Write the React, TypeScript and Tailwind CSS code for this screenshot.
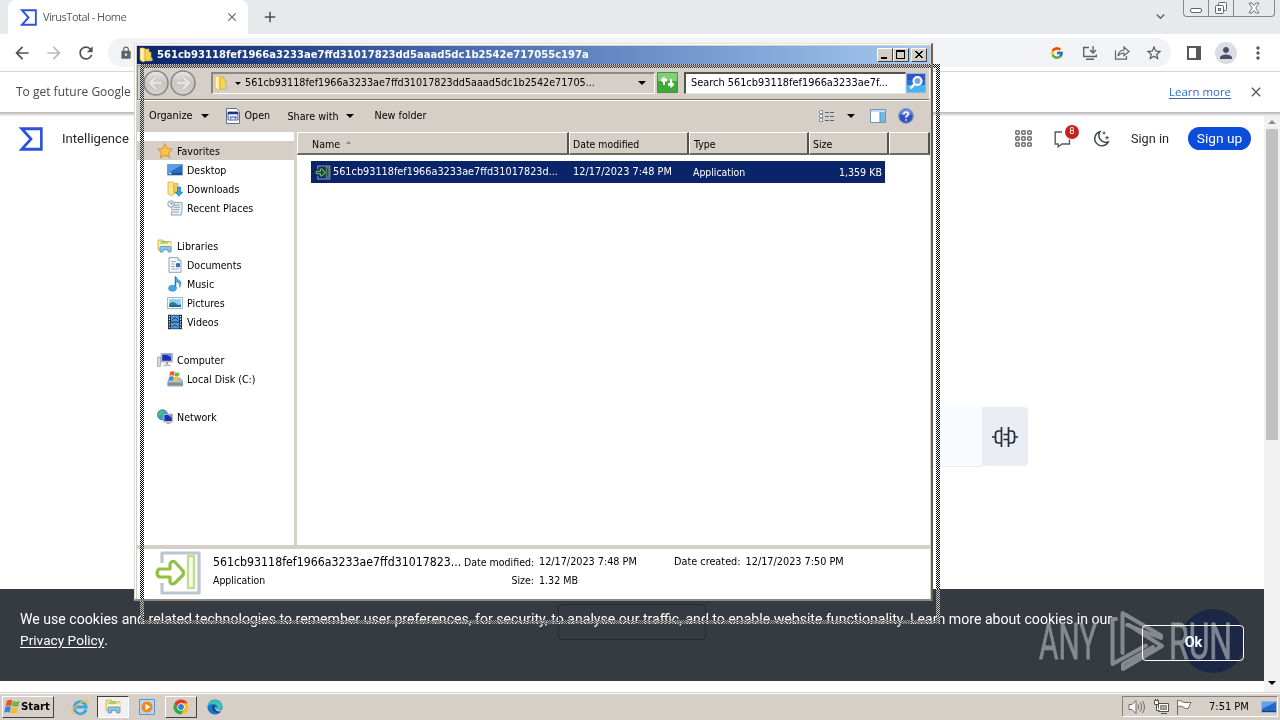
import type { ReactNode } from "react";
import { MdArrowBack, MdArrowForward, MdRefresh, MdLock, MdStarBorder, MdClose, MdAdd, MdMoreVert, MdPerson, MdExpandMore } from "react-icons/md";
import { FcGoogle } from "react-icons/fc";

const folderId = "561cb93118fef1966a3233ae7ffd31017823dd5aaad5dc1b2542e717055c197a";

function Caret({ className = "" }: { className?: string }) {
  return (
    <svg viewBox="0 0 8 4" className={`h-1 w-2 shrink-0 ${className}`}>
      <path d="M0 0h8L4 4z" fill="#000" />
    </svg>
  );
}

function SigmaLogo({ size }: { size: number }) {
  return (
    <svg width={size} height={size} viewBox="0 0 22 20" preserveAspectRatio="none" className="shrink-0">
      <path d="M2.5 1.5H20.5V18.5H2.5L11 10Z" fill="none" stroke="#2b52dd" strokeWidth="2.4" />
    </svg>
  );
}

function FolderIcon() {
  return (
    <svg viewBox="0 0 16 16" className="h-4 w-4 shrink-0">
      <path d="M2 1h4l1 1v12l-2 1-3-2z" fill="#fbe98c" stroke="#d9b43c" strokeWidth=".6" />
      <path d="M7 2h4v3h2v9H7z" fill="#f3d45c" stroke="#cfa22e" strokeWidth=".6" />
      <path d="M4 2v11" stroke="#fffbd6" strokeWidth="1.4" />
      <path d="M13 10v4h1.5v-3z" fill="#9ccdf0" />
    </svg>
  );
}

function AppIcon({ className, dark = false }: { className: string; dark?: boolean }) {
  return (
    <svg viewBox="0 0 46 46" className={className}>
      <path
        d="M7 13V3H44V43H7V33"
        fill={dark ? "#0f2a66" : "#fff"}
        stroke={dark ? "#7fa3c8" : "#bcc5d2"}
        strokeWidth="3.2"
        strokeLinejoin="round"
      />
      <path d="M33 6h6v32h-6z" fill={dark ? "none" : "#f7fbef"} stroke={dark ? "#86b86a" : "#c3dd8f"} strokeWidth="2.4" />
      <path
        d="M4 19H15V14Q17 10 20 12L28 21Q29 23 28 25L20 33Q16 35 15 32V27H4Q0 23 4 19Z"
        fill={dark ? "#173f5c" : "#fff"}
        stroke={dark ? "#7fc254" : "#92c043"}
        strokeWidth="3.2"
        strokeLinejoin="round"
      />
    </svg>
  );
}

function LibraryIcon({ className = "h-4 w-4" }: { className?: string }) {
  return (
    <svg viewBox="0 0 16 16" className={className}>
      <path d="M1 2h5l1 1.5h7V12H1z" fill="#f8e08a" stroke="#cfae4b" strokeWidth=".8" />
      <path d="M2 5h12v4H2z" fill="#fdf3bf" />
      <path d="M5 3.5h4M3 5h8" stroke="#7fbf6a" strokeWidth="1" />
      <path d="M3 14V9.5q0-1 1-1h9q1 0 1 1V14h-3v-2.500H6V14z" fill="#8ec6ee" stroke="#4a93cc" strokeWidth=".8" />
    </svg>
  );
}

const icons: Record<string, ReactNode> = {
  star: (
    <path d="M8 .8 10.200 5.500 15.400 6 11.600 9.600 12.800 15 8 12.200 3.200 15 4.400 9.600.6 6 5.800 5.500z" fill="#fcc14a" stroke="#e08a1e" strokeWidth=".9" />
  ),
  desktop: (
    <>
      <path d="M.5 2.500h15v10.500H.5z" fill="#2d6cc4" stroke="#7c9bc2" />
      <path d="M1 3h14L1 11z" fill="#5d9ce6" />
      <path d="M1 12h14" stroke="#1a3f7d" strokeWidth="1.500" />
      <path d="M1.500 11.500h3" stroke="#cfe8ff" strokeWidth="1.500" />
    </>
  ),
  downloads: (
    <>
      <path d="M1 1h5l1 1.500V13l-2 2-4-2z" fill="#fbe48a" stroke="#d2a83b" strokeWidth=".7" />
      <path d="M7 2.500h4v10H7z" fill="#f2cf5c" stroke="#d2a83b" strokeWidth=".7" />
      <path d="M10.500 6h3v5h2.200L12 15.300 8.300 11h2.200z" fill="#3aa0e6" stroke="#1a74b8" strokeWidth=".7" />
    </>
  ),
  recent: (
    <>
      <path d="M5 2.500h10v8l-1 4.500H4l1-3z" fill="#eef3f7" stroke="#8799a8" strokeWidth=".9" />
      <path d="M7 5h6M7 7.200h6M6.500 9.500h6M6 12h6" stroke="#7d97ad" strokeWidth=".9" />
      <circle cx="4" cy="4" r="3.200" fill="#f6fafd" stroke="#7f93a5" strokeWidth=".9" />
      <path d="M4 2v2h1.700" stroke="#456" strokeWidth=".8" fill="none" />
    </>
  ),
  document: (
    <>
      <path d="M2 .7h9l3 3V15.300H2z" fill="#fbfdff" stroke="#7e96b0" strokeWidth=".9" />
      <path d="M11 .7v3h3" fill="#d5e2ef" stroke="#7e96b0" strokeWidth=".7" />
      <path d="M4 4.500h5M4 7h4M4 9.500h4M4 12h8" stroke="#8aa0bb" strokeWidth=".9" />
      <path d="M9 6.200h4v4H9z" fill="#2f72b8" />
    </>
  ),
  music: (
    <>
      <path d="M8.500 1v11" stroke="#2579bd" strokeWidth="1.600" />
      <path d="M8.500 0q1 3 4 4.500t0 7q1-5-4-6z" fill="#4aa7e4" stroke="#2579bd" strokeWidth=".5" />
      <ellipse cx="5.500" cy="12.300" rx="4" ry="3" fill="#46a5e8" stroke="#2579bd" strokeWidth=".5" />
    </>
  ),
  picture: (
    <>
      <path d="M.6 2.600h14.800v11H.6z" fill="#fff" stroke="#8aa7c2" strokeWidth=".9" />
      <path d="M2.200 4.200h11.600v7.800H2.200z" fill="#8dcdf3" />
      <path d="M2.200 8.500q4-3 7 0t4.600 0V12H2.200z" fill="#2b7f95" />
      <path d="M2.200 10.500h11.600V12H2.200z" fill="#1f5f9c" />
    </>
  ),
  video: (
    <>
      <path d="M1 .8h14v14.400H1z" fill="#1f2c38" />
      <path d="M4 1.600h8v6H4zM4 8.600h8v6H4z" fill="#4c9ae0" />
      <path d="M5 6q3-4 6 0M5 13q3-4 6 0" stroke="#173f78" fill="none" />
      <path d="M2.500 2v13M13.500 2v13" stroke="#e8eef4" strokeWidth="1.200" strokeDasharray="1.300 1.300" />
    </>
  ),
  computer: (
    <>
      <path d="M.6 5h2.800v9.400H.6z" fill="#dcdfe4" stroke="#8b919b" strokeWidth=".7" />
      <path d="M4 1.500h11.400v8.500H4z" fill="#cfd3da" stroke="#8f95a1" strokeWidth=".7" />
      <path d="M5.200 2.600h9v6.200h-9z" fill="#1c2fb5" />
      <path d="M9 2.600h5.200v3z" fill="#6f88ea" />
      <path d="M7 12.500h6l1.500 1.800H6z" fill="#b9bec8" />
      <path d="M9 10h2v2.500H9z" fill="#9ba1ad" />
    </>
  ),
  disk: (
    <>
      <path d="M2 9 4 7h9l2.500 3v5H.8V11z" fill="#b7bfc8" stroke="#7b8692" strokeWidth=".7" />
      <path d="M1.200 11.500h14v2.800h-14z" fill="#79909f" />
      <path d="M12 12h2v1.600h-2z" fill="#56c84d" />
      <path d="M3.200.8q2.300-1.300 4.400 0L6.800 4.800q-2.200-1-4.400.3z" fill="#ee5a2c" />
      <path d="M8.200 1.200q2.200 1 4.400 0L11.600 5.200q-2.200.8-4.300-.2z" fill="#6cba3a" />
      <path d="M2.200 5.800q2.200-1.200 4.400-.2l-.8 4q-2.200-1-4.400.2z" fill="#3d8be0" />
      <path d="M7.100 5.900q2.200 1 4.400.1L10.700 10q-2.200.8-4.400-.2z" fill="#fbc226" />
    </>
  ),
  network: (
    <>
      <circle cx="5.500" cy="5.800" r="5.200" fill="#3c9bd2" stroke="#2a6f9f" strokeWidth=".5" />
      <path d="M3 2q3-1 4 1l-2 3-3 1-1-2zM5 8l3 .5-1 2.200H5z" fill="#4fc06a" />
      <path d="M6.500 5h9.200v8H6.500z" fill="#cfd3da" stroke="#8f95a1" strokeWidth=".6" />
      <path d="M7.400 5.900h7.400v6.100H7.400z" fill="#1c2fb5" />
      <path d="M11 5.900h3.800v3z" fill="#7c92ee" />
      <path d="M9.500 13.200h4V15h-4z" fill="#aeb4bf" />
    </>
  ),
};

interface TreeRow {
  label: string;
  icon: string;
  root?: boolean;
  active?: boolean;
}

const tree: (TreeRow | null)[] = [
  { label: "Favorites", icon: "star", root: true, active: true },
  { label: "Desktop", icon: "desktop" },
  { label: "Downloads", icon: "downloads" },
  { label: "Recent Places", icon: "recent" },
  null,
  { label: "Libraries", icon: "library", root: true },
  { label: "Documents", icon: "document" },
  { label: "Music", icon: "music" },
  { label: "Pictures", icon: "picture" },
  { label: "Videos", icon: "video" },
  null,
  { label: "Computer", icon: "computer", root: true },
  { label: "Local Disk (C:)", icon: "disk" },
  null,
  { label: "Network", icon: "network", root: true },
];

function Sidebar() {
  return (
    <div className="flex w-[157px] shrink-0 flex-col bg-white pt-[9px] text-[10.600px]">
      {tree.map((row, i) =>
        row ? (
          <div
            key={i}
            className={`flex h-[19px] items-center gap-1 ${row.active ? "bg-[#d6cfc7]" : ""} ${row.root ? "pl-5" : "pl-[30px]"}`}
          >
            {row.icon === "library" ? (
              <LibraryIcon />
            ) : (
              <svg viewBox="0 0 16 16" className="h-4 w-4 shrink-0">
                {icons[row.icon]}
              </svg>
            )}
            <span className="pt-0.5">{row.label}</span>
          </div>
        ) : (
          <div key={i} className="h-[19px]" />
        ),
      )}
    </div>
  );
}

function HeaderCell({ className, children }: { className: string; children?: ReactNode }) {
  return (
    <div
      className={`flex h-[23px] items-center border-t border-r-2 border-b-2 border-l border-t-white border-r-[#55524e] border-b-[#6d6a65] border-l-white bg-[#d6cfc7] pt-[3px] ${className}`}
    >
      {children}
    </div>
  );
}

function CaptionButton({ children }: { children: ReactNode }) {
  return (
    <div className="flex h-[14px] w-4 items-center justify-center border border-t-white border-r-[#404040] border-b-[#404040] border-l-white bg-[#d6cfc7]">
      <svg viewBox="0 0 10 10" className="h-[10px] w-[10px]" shapeRendering="crispEdges">
        {children}
      </svg>
    </div>
  );
}

function NavCircle({ flip = false }: { flip?: boolean }) {
  return (
    <svg viewBox="0 0 26 26" className="h-[26px] w-[26px] shrink-0">
      <defs>
        <linearGradient id="navFace" x1="0" y1="0" x2="0" y2="1">
          <stop offset="0" stopColor="#e9e8e6" />
          <stop offset=".5" stopColor="#c6c4c1" />
          <stop offset="1" stopColor="#d8d6d2" />
        </linearGradient>
      </defs>
      <circle cx="13" cy="13" r="12" fill="url(#navFace)" stroke="#8a8886" strokeWidth="1.600" />
      <g transform={flip ? "matrix(-1 0 0 1 26 0)" : undefined}>
        <path d="M13 7 7 13l6 6M7.500 13H19" fill="none" stroke="#b5b2ae" strokeWidth="4" />
        <path d="M13 7 7 13l6 6M7.500 13H19" fill="none" stroke="#e6e4e1" strokeWidth="2.800" />
      </g>
    </svg>
  );
}

function Explorer() {
  return (
    <div className="absolute top-[43px] left-[134px] flex h-[558px] w-[799px] flex-col border-t border-r-2 border-b-2 border-l border-t-[#e6e3de] border-r-[#66635f] border-b-[#8c8984] border-l-[#dedbd5] bg-[#d6cfc7] pt-0.5 pr-px pl-0.5 font-['DejaVu_Sans_Condensed','DejaVu_Sans',sans-serif] text-[10.5px] whitespace-nowrap text-black shadow-[inset_1px_1px_0_#fff]">
      <div className="flex h-[18px] shrink-0 items-center bg-linear-to-r from-[#0a246a] via-[#3f62a6] via-35% to-[#a6caf0] pr-[3px] pl-px">
        <FolderIcon />
        <span className="ml-[3px] flex-1 pt-px text-[11.15px] font-bold text-white">{folderId}</span>
        <CaptionButton>
          <path d="M1 7h6v2H1z" fill="#000" />
        </CaptionButton>
        <CaptionButton>
          <path d="M0 0h9v9H0zM1 2v6h7V2z" fill="#000" fillRule="evenodd" />
        </CaptionButton>
        <span className="w-0.5" />
        <CaptionButton>
          <path d="M1 1h2v1h1v1h2V2h1V1h2v1H8v1H7v1H6v1h1v1h1v1h1v1H7V7H6V6H4v1H3v1H1V7h1V6h1V5h1V4H3V3H2V2H1z" fill="#000" />
        </CaptionButton>
      </div>

      <div className="mt-px flex h-[35px] shrink-0 items-center border border-t-[#8f8b86] border-r-white border-b-[#77736e] border-l-[#8f8b86] pl-[5px] shadow-[0_1px_0_#fff]">
        <NavCircle />
        <span className="w-px" />
        <NavCircle flip />
        <div className="ml-[15px] flex h-[22px] w-[444px] items-center border-t-2 border-r border-b border-l-2 border-t-[#8b8883] border-r-white border-b-white border-l-[#8b8883]">
          <FolderIcon />
          <svg viewBox="0 0 6 3" className="ml-[6px] h-[3px] w-[6px]">
            <path d="M0 0h6L3 3z" />
          </svg>
          <span className="ml-1 flex-1 text-[10.71px]">561cb93118fef1966a3233ae7ffd31017823dd5aaad5dc1b2542e71705...</span>
          <Caret className="mr-2" />
        </div>
        <svg viewBox="0 0 21 21" className="ml-0.5 h-[21px] w-[21px] shrink-0">
          <path d="M.5.5h20v20H.5z" fill="#3faa36" stroke="#4f8f4a" />
          <path d="M1 1h19v8H1z" fill="#7fd071" />
          <path d="M7.500 4 3.500 8l4 4V9.500h2.500v-3H7.500zM13.500 8.500l4 4-4 4V14H11v-3h2.500z" fill="#fff" />
          <path d="M7 10v3M14 11V7" stroke="#fff" strokeWidth="1.800" />
        </svg>
        <div className="ml-[6px] flex h-[22px] w-[222px] shrink-0 items-center border-t-2 border-r border-b border-l-2 border-t-[#55524e] border-r-[#e6e3de] border-b-[#e6e3de] border-l-[#55524e] bg-white pl-[5px] text-[10.88px]">
          Search 561cb93118fef1966a3233ae7f...
        </div>
        <svg viewBox="0 0 20 20" className="h-5 w-5 shrink-0">
          <path d="M.5.5h19v19H.5z" fill="#2f6fd0" stroke="#8fb6e8" />
          <path d="M1 12h18v7H1z" fill="#49b4ee" />
          <path d="M1 1h18v6H1z" fill="#3556bd" />
          <circle cx="11.500" cy="8" r="4" fill="#6fa6ea" stroke="#fff" strokeWidth="2" />
          <path d="M8.500 11 4.500 15.500" stroke="#fff" strokeWidth="2.600" />
        </svg>
      </div>

      <div className="flex h-8 shrink-0 items-center pl-3 text-[10.8px]">
        <span className="pt-px">Organize</span>
        <Caret className="ml-2" />
        <svg viewBox="0 0 14 16" className="ml-[17px] h-4 w-[14px]">
          <path d="M.5.5h10l3 3v12H.5z" fill="#fff" stroke="#5f6f86" />
          <path d="M2 4h10v8H2z" fill="#e9eef8" stroke="#2d3a66" strokeWidth=".8" />
          <path d="M2 4h10v2.200H2z" fill="#1d2f86" />
          <path d="M4 8.500h1.500v2H4zM6.500 8h1v2h-1zM8.500 8.500h2v2h-2z" fill="#2f4bb0" />
        </svg>
        <span className="ml-[5px] w-[43px] pt-px text-[10.700px]">Open</span>
        <span className="pt-px text-[10.65px]">Share with</span>
        <Caret className="ml-2" />
        <span className="ml-5 flex-1 pt-px text-[10.700px]">New folder</span>
        <svg viewBox="0 0 16 14" className="h-[14px] w-4" shapeRendering="crispEdges">
          <path d="M.5 1.500h3v3h-3zM.5 5.500h3v3h-3zM.5 9.500h3v3h-3z" fill="#fff" stroke="#77808c" strokeWidth=".8" />
          <path d="M6 3h9M6 7h9M6 11h9" stroke="#5d6370" strokeDasharray="4 1" />
        </svg>
        <Caret className="ml-3" />
        <svg viewBox="0 0 16 14" className="ml-[15px] h-[14px] w-4">
          <path d="M.5.500h15v13H.5z" fill="#fff" stroke="#7791b0" />
          <path d="M1 1h14v2H1z" fill="#c2dcf3" />
          <path d="M10 3h5v10h-5z" fill="#6fbbe4" />
          <path d="M10 3v10" stroke="#4f8fbd" />
        </svg>
        <svg viewBox="0 0 16 16" className="mr-4 ml-3 h-4 w-4">
          <circle cx="8" cy="8" r="7.300" fill="#3150c0" stroke="#8896bd" strokeWidth="1.200" />
          <path d="M2 6a6.200 6.200 0 0 1 12 0q-6 3-12 0z" fill="#6d8be6" />
          <path d="M5.700 6.300Q5.800 4 8 4t2.300 2Q10.300 7.200 9 8T8 9.700M8 11.200v1.600" stroke="#fff" strokeWidth="1.600" fill="none" />
        </svg>
      </div>

      <div className="flex min-h-0 flex-1">
        <Sidebar />
        <div className="w-[3px] bg-[#d6d3cb]" />
        <div className="flex flex-1 flex-col bg-white">
          <div className="flex">
            <HeaderCell className="w-[272px] pl-3.5 text-[10.600px]">
              Name
              <svg viewBox="0 0 5 3" className="mb-1 ml-1.5 h-[3px] w-[5px]">
                <path d="M0 3h5L2.500 0z" fill="#8f8b86" />
              </svg>
            </HeaderCell>
            <HeaderCell className="w-[120px] pl-[3px] text-[10.400px]">Date modified</HeaderCell>
            <HeaderCell className="w-[120px] pl-1">Type</HeaderCell>
            <HeaderCell className="w-[80px] pl-[3px]">Size</HeaderCell>
            <HeaderCell className="flex-1" />
          </div>
          <div className="mt-1.5 ml-3.5 flex h-[22px] w-[574px] items-center bg-[#0a246a] text-white *:pt-px">
            <AppIcon className="ml-1 h-4 w-4" dark />
            <span className="ml-[2px] w-[240px] text-[10.800px]">561cb93118fef1966a3233ae7ffd31017823d...</span>
            <span className="w-[120px] text-[10.89px]">12/17/2023 7:48 PM</span>
            <span className="flex-1 text-[10.400px]">Application</span>
            <span className="pr-[3px] text-[10.600px]">1,359 KB</span>
          </div>
        </div>
      </div>

      <div className="flex h-[54px] shrink-0 border-t-4 border-[#d6cfc7] bg-white">
        <AppIcon className="mt-px ml-[18px] h-[46px] w-[46px]" />
        <div className="ml-3 w-[251px] pt-[4px] leading-[18px]">
          <div className="text-[12.250px]">561cb93118fef1966a3233ae7ffd31017823...</div>
          <div className="text-[10.400px]">Application</div>
        </div>
        <div className="grid w-[210px] grid-cols-[70px_1fr] content-start gap-x-[5px] pt-[4px] leading-[18px]">
          <span className="text-right text-[10.500px]">Date modified:</span>
          <span className="text-[10.750px]">12/17/2023 7:48 PM</span>
          <span className="text-right">Size:</span>
          <span className="text-[10.600px]">1.32 MB</span>
        </div>
        <div className="flex gap-[5px] pt-[4px] leading-[18px]">
          <span className="text-[10.800px]">Date created:</span>
          <span className="text-[10.800px]">12/17/2023 7:50 PM</span>
        </div>
      </div>
    </div>
  );
}

function DragOutline() {
  const strip =
    "absolute bg-[repeating-conic-gradient(#fff_0_25%,transparent_0_50%)] bg-[length:2px_2px] mix-blend-difference";
  return (
    <>
      <div className={`${strip} top-16 left-[140px] h-1 w-[800px]`} />
      <div className={`${strip} top-[68px] left-[140px] h-[552px] w-1`} />
      <div className={`${strip} top-[68px] left-[936px] h-[552px] w-1`} />
      <div className={`${strip} top-[620px] left-[140px] h-1 w-[800px] opacity-70`} />
    </>
  );
}

function Browser() {
  return (
    <div className="flex h-[692px] shrink-0 flex-col bg-white font-['Roboto',sans-serif] whitespace-nowrap">
      <div className="flex h-[34px] shrink-0 items-start bg-[#e6eaed] pl-2">
        <div className="flex h-[34px] w-60 items-center rounded-t-lg bg-white pr-[9px] pl-3">
          <SigmaLogo size={17} />
          <span className="ml-[6px] flex-1 font-['Open_Sans','Noto_Sans',sans-serif] text-[11px] tracking-[-0.5px] text-[#55585c]">VirusTotal - Home</span>
          <MdClose size={14} className="text-[#5f6368]" />
        </div>
        <MdAdd size={18} className="mt-2 ml-[13px] text-[#4b4f54]" />
        <div className="flex-1" />
        <MdExpandMore size={17} className="mt-2 mr-[14px] text-[#5f6368]" />
        <div className="mr-[5px] flex h-[17px] w-[92px] rounded-b-[4px] border border-t-0 border-[#85898d]">
          <div className="flex w-[25px] items-center justify-center border-r border-[#85898d] pt-[5px]">
            <div className="h-[5px] w-3 rounded-[2px] border border-[#606468] bg-white" />
          </div>
          <div className="flex w-[25px] items-center justify-center border-r border-[#85898d]">
            <svg viewBox="0 0 14 14" className="h-[14px] w-[14px]" fill="#fff" stroke="#606468">
              <rect x="4.500" y="1.500" width="8" height="8" rx="1" />
              <rect x="1.500" y="4.500" width="8" height="8" rx="1" />
              <rect x="4.500" y="7.500" width="2" height="2" />
            </svg>
          </div>
          <div className="flex flex-1 items-center justify-center">
            <svg viewBox="0 0 12 12" className="h-3 w-3" fill="#fff" stroke="#606468" strokeWidth=".9">
              <path d="M1 1h3l2 2.500L8 1h3L7.700 6 11 11H8L6 8.500 4 11H1l3.300-5z" />
            </svg>
          </div>
        </div>
      </div>

      <div className="flex h-[38px] shrink-0 items-center border-b border-[#d3d5d8] pl-3">
        <MdArrowBack size={20} className="text-[#4f5358]" />
        <MdArrowForward size={20} className="ml-[12px] text-[#b9bbbe]" />
        <MdRefresh size={20} className="ml-[12px] text-[#4f5358]" />
        <div className="ml-3 flex h-[29px] w-[1063px] items-center rounded-full bg-[#f1f3f4] pl-[11px]">
          <MdLock size={14} className="text-[#5f6368]" />
          <div className="flex-1" />
          <FcGoogle size={14} />
          <svg viewBox="0 0 16 16" className="ml-[18px] h-4 w-4" fill="none" stroke="#5f6368" strokeWidth="1.400">
            <path d="M7 2.500H1.700v9h12.600V9.500M4 14.300h8" />
            <path d="M11 1v6.500M8 5l3 3 3-3" />
          </svg>
          <svg viewBox="0 0 16 16" className="ml-4 h-4 w-4" fill="none" stroke="#5f6368" strokeWidth="1.200">
            <path d="M1.500 5.500v8.700h11V11" />
            <path d="M4 11Q4.500 5.500 10 5V2l5 4.500-5 4.300V8Q6 8 4 11Z" />
          </svg>
          <MdStarBorder size={18} className="mr-[8px] ml-[15px] text-[#55595e]" />
        </div>
        <svg viewBox="0 0 14 14" className="ml-4 h-[14px] w-[14px]">
          <path d="M1 1h12v12H1z" fill="none" stroke="#55595e" strokeWidth="2" />
          <path d="M9 1h4v12H9z" fill="#55595e" />
        </svg>
        <div className="ml-[14px] flex h-[22px] w-[22px] items-center justify-center rounded-full bg-[#dadde3]">
          <MdPerson size={18} className="text-[#4a5166]" />
        </div>
        <MdMoreVert size={20} className="ml-[11px] text-[#55595e]" />
      </div>

      <div className="flex h-10 shrink-0 items-center pr-[16px] pl-4 font-['Open_Sans','Noto_Sans',sans-serif] text-[12px] text-[#45484c]">
        <span className="flex-1">To get future Google Chrome updates</span>
        <span className="mr-[17px] text-[11.44px] text-[#2f6ac8] underline underline-offset-2">Learn more</span>
        <MdClose size={16} className="text-[#55595e]" />
      </div>
      <div className="h-[4px] shrink-0 bg-linear-to-b from-[#b4b4b4] to-[#f4f4f4]" />

      <div className="flex min-h-0 flex-1">
        <div className="flex flex-1 flex-col">
          <div className="flex h-[45px] shrink-0 items-center pr-[13px] pl-[19px] text-[13.100px] text-[#23262a]">
            <SigmaLogo size={24} />
            <span className="ml-[19px] flex-1">Intelligence</span>
            <svg viewBox="0 0 17 17" className="h-[17px] w-[17px]" fill="none" stroke="#4d5257" strokeWidth="1.200">
              {[1, 7, 13].map((y) => [1, 7, 13].map((x) => <rect key={`${x}-${y}`} x={x - 0.2} y={y - 0.2} width="3.400" height="3.400" rx=".8" />))}
            </svg>
            <div className="relative ml-[22px]">
              <svg viewBox="0 0 18 18" className="h-[18px] w-[18px]" fill="none" stroke="#55595e" strokeWidth="1.400">
                <path d="M8 2H1.200v12h3v2.800L8 14h7.500V9.500" />
              </svg>
              <span className="absolute -top-[5px] left-[11px] flex h-[14px] w-[14px] items-center justify-center rounded-full bg-[#c5221f] text-[9.500px] text-white">8</span>
            </div>
            <svg viewBox="0 0 18 18" className="ml-5 h-[18px] w-[18px]" fill="none" stroke="#3f4449" strokeWidth="1.400">
              <path d="M8 1.700A7.200 7.200 0 1 0 16.300 12 7 7 0 0 1 8 1.700Z" />
              <path d="M12 1.500v3M10.500 3h3M15 6v3.500M13.300 7.700h3.500" strokeWidth="1" />
            </svg>
            <span className="ml-[21px] text-[12.690px]">Sign in</span>
            <span className="ml-[19px] flex h-[23px] w-[63px] items-center justify-center rounded-full bg-[#0b4dda] text-[13.700px] text-white">Sign up</span>
          </div>
          <div className="mt-[246px] flex h-[60px] shrink-0 justify-end pr-[236px]">
            <div className="w-[600px] border-b border-[#e9ecf2] bg-[#f8fbff]" />
            <div className="flex h-[59px] w-[46px] items-center justify-center rounded-r bg-[#ebedf4]">
              <svg viewBox="0 0 26 20" className="h-5 w-[26px]" fill="none" stroke="#272b38" strokeWidth="1.700">
                <path d="M0 10h3.500M9 4H6.500Q3.500 4 3.500 7v6Q3.500 16 6.500 16H9M9.500 0v20M16.500 0v20M17 4h2.500Q22.500 4 22.500 7v6Q22.500 16 19.500 16H17M22.500 10H26M11.500 7.500h5M11.500 12.500h5" />
              </svg>
            </div>
          </div>
          <div className="mt-auto mb-[11px] flex h-[92px] shrink-0 items-start bg-[#363a41] pl-5 text-white">
            <div className="w-[1122px] pt-[20px] text-[14.120px] leading-[21px]">
              We use cookies and related technologies to remember user preferences, for security, to analyse our traffic, and to enable website functionality. Learn more about cookies in our
              <br />
              <span className="text-[13.700px] underline underline-offset-2">Privacy Policy</span>.
            </div>
            <div className="mt-9 h-9 w-[102px]" />
          </div>
        </div>
        <div className="flex w-4 flex-col items-center bg-[#f1f1f1]">
          <svg viewBox="0 0 8 4" className="mt-[4px] h-1 w-2">
            <path d="M0 4h8L4 0z" fill="#8c8c8c" />
          </svg>
          <div className="mt-[5px] h-[311px] w-3 bg-[#c1c1c1]" />
          <div className="flex-1" />
          <Caret className="mb-[7px]" />
        </div>
      </div>
    </div>
  );
}

function Watermark() {
  return (
    <svg className="absolute top-[604px] left-[1034px] h-[72px] w-[216px]" viewBox="1034 604 216 72">
      <circle cx="1213" cy="641" r="32" fill="#1b2745" />
      <g opacity=".75" fill="#a0a4aa">
        <text x="1039" y="659" fontSize="50" fontFamily="Roboto" textLength="58" lengthAdjust="spacingAndGlyphs" stroke="#a0a4aa" strokeWidth=".8">ANY</text>
        <text x="1169" y="659" fontSize="50" fontFamily="Roboto" textLength="63" lengthAdjust="spacingAndGlyphs" stroke="#a0a4aa" strokeWidth=".8">RUN</text>
        <g fill="none" stroke="#a0a4aa" strokeWidth="4" strokeLinejoin="round" strokeLinecap="round">
          <path d="M1116 619H1112.500V664L1146 645.500" />
          <path d="M1122.500 653V613L1161 635.500V638L1127 625" />
          <path d="M1129 625 1162 646 1123 669V664L1153 647" />
        </g>
      </g>
    </svg>
  );
}

function ChromeLogo() {
  return (
    <svg viewBox="0 0 16 16" className="h-4 w-4">
      <circle cx="8" cy="8" r="7.500" fill="#fbc116" />
      <path d="M1.500 4.250A7.500 7.500 0 0 1 14.500 4.250H8L4.750 9.900Z" fill="#e33b2e" />
      <path d="M1.500 4.250A7.500 7.500 0 0 0 8 15.500L11.250 9.900H4.750Z" fill="#2da94f" />
      <circle cx="8" cy="8" r="3.700" fill="#fff" />
      <circle cx="8" cy="8" r="2.900" fill="#2f7de1" />
    </svg>
  );
}

function Taskbar() {
  return (
    <div className="flex h-7 shrink-0 items-center border-t border-[#d6cfc7] bg-[#d6cfc7] pr-0.5 pl-0.5 font-['DejaVu_Sans_Condensed','DejaVu_Sans',sans-serif] text-[11px] whitespace-nowrap shadow-[inset_0_1px_0_#fff]">
      <div className="flex h-[22px] w-[52px] items-center border border-t-white border-r-[#404040] border-b-[#404040] border-l-white pl-px text-[11.33px] font-bold">
        <svg viewBox="0 0 16 16" className="h-4 w-4 shrink-0">
          <path d="M3 1.500q3-1.700 5.500 0L7.300 7q-2.800-1.200-5.800 0z" fill="#e8552b" />
          <path d="M9.200 2q2.800 1.300 6.500 0L14.200 7.200q-3.300 1.200-6.200-.2z" fill="#6fb63c" />
          <path d="M1.300 8q3-1.300 5.700 0l-1.400 5.500q-2.600-1.200-5.300 0z" fill="#3b84dc" />
          <path d="M7.800 8.200q2.900 1.300 6.200.2L12.500 14q-3 1-6-.2z" fill="#f6bc28" />
        </svg>
        <span className="ml-px">Start</span>
      </div>
      <svg viewBox="0 0 18 18" className="ml-[17px] h-[18px] w-[18px]">
        <path d="M15 11.500A6 6 0 1 1 15.200 9H5" fill="none" stroke="#3ea4e2" strokeWidth="2.800" />
        <path d="M2 16Q-1 12 7 6.500T16.800 2.500q.8 1-1 3" fill="none" stroke="#f0c23e" strokeWidth="1.500" />
      </svg>
      <div className="ml-[8px] flex h-[22px] w-8 items-center justify-center border border-t-[#404040] border-r-white border-b-white border-l-[#404040] bg-[#f2efec]">
        <LibraryIcon className="h-[17px] w-[17px]" />
      </div>
      <svg viewBox="0 0 16 16" className="ml-[10px] h-4 w-4">
        <path d="M.5.500h15v15H.5z" fill="#b9d7f2" stroke="#5e93cf" />
        <circle cx="8" cy="8" r="5.600" fill="#f08a1d" />
        <path d="M6.500 4.800v6.400L11.300 8z" fill="#fff" />
      </svg>
      <div className="ml-[10px] flex h-[22px] w-8 items-center justify-center border border-t-white border-r-[#404040] border-b-[#404040] border-l-white">
        <ChromeLogo />
      </div>
      <svg viewBox="0 0 16 16" className="ml-[10px] h-4 w-4">
        <circle cx="8" cy="8" r="7.600" fill="#1876c9" />
        <path d="M.5 7.500A7.600 7.600 0 0 1 15.600 8q0 3-3.400 3-3 0-2.600-2 .8-3.500-3.200-4T.5 7.500Z" fill="#39c3b4" />
        <path d="M5 9q0-3 3-3 2.400.5 1.600 3-.4 2 2.600 2 2 0 3-.8-1 2.500-3.500 3.600Q5 14 5 9Z" fill="#0d4f9e" />
        <path d="M8.500 7.500q1.400.8.9 2 .4 1.800 3 1.800 1.600 0 2.600-.7v1.200q-3 1.200-5.200 0T8.500 7.500Z" fill="#d6cfc7" />
      </svg>
      <div className="flex-1" />
      <div className="flex h-[21px] w-[156px] items-center border border-t-[#85817c] border-r-white border-b-white border-l-[#85817c] pl-[5px]">
        <svg viewBox="0 0 18 16" className="h-4 w-[18px]" fill="none" stroke="#6e6b67">
          <path d="M1 5.500h3L8 1.500v13L4 10.500H1z" fill="#fff" />
          <path d="M10 5.500q1.500 2.500 0 5M12.300 3.500q3 4.500 0 9M14.500 2q4 6 0 12" />
        </svg>
        <svg viewBox="0 0 16 16" className="ml-[7px] h-4 w-4" fill="#fff" stroke="#55524e">
          <path d="M5.500 4.500h10v8h-10z" />
          <path d="M7.500 6.500h6v4h-6z" fill="#a9a6a1" stroke="#8b8883" />
          <path d="M8 14.500h6" />
          <path d="M1.500 1.500h4v4h-4zM3.500 5.500v6h3M2.500 0v2M4.500 0v2" />
        </svg>
        <svg viewBox="0 0 16 16" className="ml-[7px] h-4 w-4" fill="#fff" stroke="#6e6b67">
          <path d="M1.500 1v15M1.500 1.500Q5 1 8 3.500h7l-3 6Q9 10 7 8T1.500 8z" />
        </svg>
        <span className="ml-[17px] w-[52px] pt-px">7:51 PM</span>
        <svg viewBox="0 0 16 14" className="h-[14px] w-4">
          <path d="M.5 1.500h15v11H.5z" fill="#2465c8" stroke="#9fb5d4" />
          <path d="M1 2h14L1 9z" fill="#5ea2ee" />
          <path d="M1 11.500h14" stroke="#173c7a" />
        </svg>
      </div>
    </div>
  );
}

export default function App() {
  return (
    <div className="relative isolate flex h-[720px] w-[1280px] flex-col overflow-hidden bg-white">
      <Browser />
      <Taskbar />
      <div className="absolute top-[604px] left-[558px] h-9 w-[148px] rounded border border-[#282c36]" />
      <Watermark />
      <div className="absolute top-[625px] left-[1142px] flex h-9 w-[102px] items-center justify-center rounded border border-white pl-px font-['Roboto',sans-serif] text-[14.500px] font-bold text-white">
        Ok
      </div>
      <Explorer />
      <DragOutline />
    </div>
  );
}
